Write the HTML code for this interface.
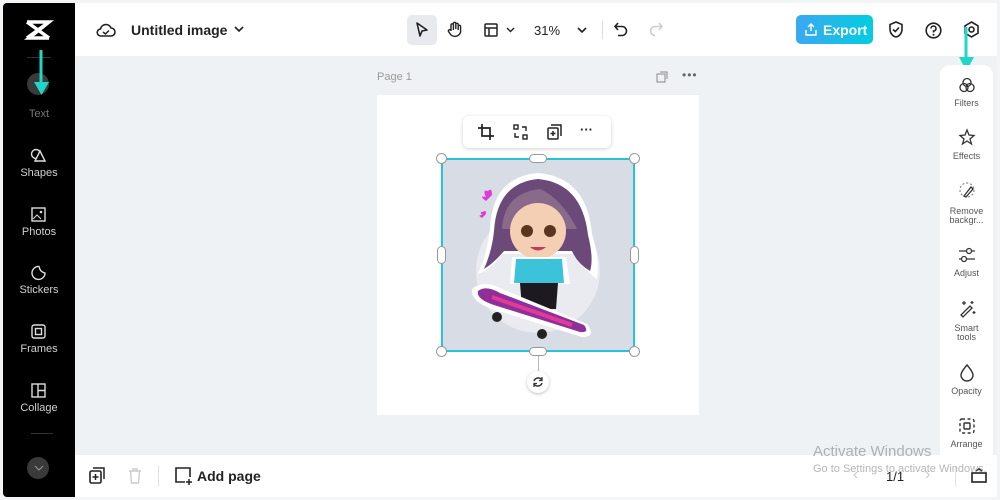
<!DOCTYPE html>
<html><head><meta charset="utf-8"><style>
*{margin:0;padding:0;box-sizing:border-box}
body{width:1000px;height:500px;overflow:hidden;background:#f3f4f6;font-family:"Liberation Sans",sans-serif;position:relative}
.a{position:absolute}
.side{left:3px;top:3px;width:72px;height:494px;background:#000;border-radius:4px 0 0 4px}
.sl{position:absolute;width:72px;text-align:center;color:#d0d0d0;font-size:11px;left:0}
.top{left:75px;top:3px;width:922px;height:53px;background:#fff}
.canvas{left:75px;top:56px;width:922px;height:399px;background:#eff2f5}
.bot{left:75px;top:455px;width:922px;height:42px;background:#fff}
.rp{left:940px;top:65px;width:53px;height:390px;background:#fff;border-radius:10px 10px 0 0}
.rl{position:absolute;left:940px;width:53px;text-align:center;font-size:9px;color:#555;line-height:9px}
svg{position:absolute;overflow:visible}
</style></head><body>
<div class="a side">
<svg style="left:22px;top:16px" width="28" height="24" viewBox="0 0 28 24"><path d="M2 3 H24 L4 19 H24 M2 3 L24 19 M2 19 L24 3" stroke="#fff" stroke-width="3.5" fill="none"/></svg>
<div class="a" style="left:24px;top:54px;width:24px;height:1px;background:#333"></div>
<div class="a" style="left:24px;top:70px;width:22px;height:22px;border-radius:50%;background:#3a3a3a"></div>
<div class="sl" style="top:105px;color:#777">Text</div>
<svg style="left:27px;top:145px" width="18" height="16"><circle cx="6" cy="6" r="4.5" fill="none" stroke="#ddd" stroke-width="1.4"/><path d="M10 3 L15 13 H5 Z" fill="#000" stroke="#ddd" stroke-width="1.4"/></svg>
<div class="sl" style="top:164px">Shapes</div>
<svg style="left:28px;top:204px" width="16" height="16"><rect x="1" y="1" width="13" height="13" fill="none" stroke="#ddd" stroke-width="1.4"/><path d="M2 12 L6 8 L10 12" stroke="#ddd" fill="none"/><circle cx="10" cy="5" r="1.3" fill="#ddd"/></svg>
<div class="sl" style="top:223px">Photos</div>
<svg style="left:28px;top:262px" width="16" height="16"><path d="M14 8 A6.5 6.5 0 1 1 8 1.5 Q9 7 14 8 Z" fill="none" stroke="#ddd" stroke-width="1.4"/></svg>
<div class="sl" style="top:281px">Stickers</div>
<svg style="left:28px;top:321px" width="16" height="16"><rect x="1" y="1" width="13" height="13" rx="2" fill="none" stroke="#ddd" stroke-width="1.4"/><rect x="4.5" y="4.5" width="6" height="6" fill="none" stroke="#ddd" stroke-width="1.4"/></svg>
<div class="sl" style="top:340px">Frames</div>
<svg style="left:28px;top:380px" width="16" height="16"><rect x="1" y="1" width="13" height="13" fill="none" stroke="#ddd" stroke-width="1.4"/><path d="M7 1 V14 M7 7.5 H14" stroke="#ddd" stroke-width="1.4"/></svg>
<div class="sl" style="top:399px">Collage</div>
<div class="a" style="left:28px;top:430px;width:22px;height:1px;background:#333"></div>
<div class="a" style="left:24px;top:454px;width:22px;height:22px;border-radius:50%;background:#3a3a3a"></div>
<svg style="left:31px;top:462px" width="10" height="6"><path d="M1 1 L5 5 L9 1" stroke="#999" fill="none"/></svg>
</div>
<div class="a" style="left:75px;top:228px;width:6px;height:47px;background:#2a2a2a;border-radius:0 6px 6px 0"></div>
<svg style="left:32px;top:50px" width="20" height="46"><path d="M9 0 V34" stroke="#1fd6c8" stroke-width="3"/><path d="M2 32 H17 L9.5 45 Z" fill="#1fd6c8"/></svg>

<div class="a top">
<svg style="left:21px;top:18px" width="20" height="18"><path d="M5 15 H15 A4 4 0 0 0 15 7 A5.5 5.5 0 0 0 4.5 8 A3.5 3.5 0 0 0 5 15 Z" fill="none" stroke="#222" stroke-width="1.6"/><path d="M7 11 L9.5 13 L13 9.5" stroke="#222" stroke-width="1.5" fill="none"/></svg>
<div class="a" style="left:56px;top:19px;font-size:14px;font-weight:bold;color:#222">Untitled image</div>
<svg style="left:159px;top:23px" width="10" height="6"><path d="M1 1 L5 5 L9 1" stroke="#222" stroke-width="1.6" fill="none"/></svg>
<div class="a" style="left:332px;top:12px;width:30px;height:30px;background:#e8eaee;border-radius:5px"></div>
<svg style="left:340px;top:19px" width="14" height="16"><path d="M2 1 L12 8 L7 9 L5 14 Z" fill="none" stroke="#222" stroke-width="1.6" stroke-linejoin="round"/></svg>
<svg style="left:372px;top:18px" width="16" height="18"><path d="M4 10 V4 A1.2 1.2 0 0 1 6.4 4 V9 M6.4 8 V2.5 A1.2 1.2 0 0 1 8.8 2.5 V8 M8.8 8 V3.5 A1.2 1.2 0 0 1 11.2 3.5 V9 M11.2 9 V5.5 A1.2 1.2 0 0 1 13.6 5.5 V11 A6 6 0 0 1 4 14 L1.5 10.5 A1.2 1.2 0 0 1 4 9.5" fill="none" stroke="#222" stroke-width="1.4"/></svg>
<svg style="left:409px;top:20px" width="14" height="14"><rect x="1" y="1" width="12" height="12" rx="1" fill="none" stroke="#222" stroke-width="1.5"/><path d="M1 5 H13 M5 5 V13" stroke="#222" stroke-width="1.5"/></svg>
<svg style="left:431px;top:24px" width="9" height="6"><path d="M1 1 L4.5 4.5 L8 1" stroke="#222" stroke-width="1.4" fill="none"/></svg>
<div class="a" style="left:459px;top:20px;font-size:13px;color:#222">31%</div>
<svg style="left:502px;top:24px" width="10" height="6"><path d="M1 1 L5 5 L9 1" stroke="#222" stroke-width="1.6" fill="none"/></svg>
<div class="a" style="left:527px;top:18px;width:1px;height:18px;background:#ddd"></div>
<svg style="left:539px;top:19px" width="14" height="15"><path d="M4 1 L1 4.5 L4 8 M1 4.5 H8 A4.5 4.5 0 0 1 8 13.5 H4" fill="none" stroke="#222" stroke-width="1.6"/></svg>
<svg style="left:574px;top:19px" width="14" height="15"><path d="M10 1 L13 4.5 L10 8 M13 4.5 H6 A4.5 4.5 0 0 0 6 13.5" fill="none" stroke="#ccc" stroke-width="1.5"/></svg>
<div class="a" style="left:721px;top:12px;width:77px;height:29px;border-radius:5px;background:linear-gradient(90deg,#3ca7f1,#03cde0)"></div>
<svg style="left:730px;top:20px" width="12" height="13"><path d="M6 8 V1 M3 4 L6 1 L9 4 M1 7 V12 H11 V7" stroke="#fff" stroke-width="1.4" fill="none"/></svg>
<div class="a" style="left:748px;top:19px;font-size:14px;font-weight:bold;color:#fff">Export</div>
<svg style="left:813px;top:18px" width="16" height="18"><path d="M8 1 L14 3.5 V8 A7 8 0 0 1 8 16 A7 8 0 0 1 2 8 V3.5 Z" fill="none" stroke="#222" stroke-width="1.6"/><path d="M5 8.5 L7.3 10.5 L11 6.5" stroke="#222" stroke-width="1.6" fill="none"/></svg>
<svg style="left:850px;top:19px" width="17" height="17"><circle cx="8.5" cy="8.5" r="7.3" fill="none" stroke="#222" stroke-width="1.6"/><path d="M6 6.5 A2.5 2.5 0 1 1 8.5 9 V10.5" stroke="#222" stroke-width="1.6" fill="none"/><circle cx="8.5" cy="12.8" r="1" fill="#222"/></svg>
<svg style="left:888px;top:18px" width="17" height="18"><path d="M8.5 1 L15 4.8 V12.2 L8.5 16 L2 12.2 V4.8 Z" fill="none" stroke="#222" stroke-width="1.6"/><circle cx="8.5" cy="8.5" r="2.5" fill="none" stroke="#222" stroke-width="1.6"/></svg>
</div>
<div class="a canvas"></div>
<svg style="left:958px;top:27px" width="18" height="46"><path d="M8 0 V32" stroke="#1fd6c8" stroke-width="3"/><path d="M1 30 H16 L8.5 44 Z" fill="#1fd6c8"/></svg>

<div class="a" style="left:377px;top:71px;font-size:11px;color:#999">Page 1</div>
<svg style="left:656px;top:71px" width="13" height="12"><rect x="1" y="3" width="8" height="8" fill="none" stroke="#888"/><path d="M4 1 H11 V8" stroke="#888" fill="none"/></svg>
<div class="a" style="left:682px;top:68px;font-size:12px;color:#666;letter-spacing:1px">•••</div>
<div class="a" style="left:377px;top:95px;width:322px;height:320px;background:#fff"></div>
<div class="a" style="left:463px;top:116px;width:148px;height:32px;background:#fff;border-radius:6px;box-shadow:0 1px 4px rgba(0,0,0,.18)"></div>
<svg style="left:478px;top:124px" width="16" height="16"><path d="M4 0 V12 H16 M0 4 H12 V16" stroke="#222" stroke-width="1.7" fill="none"/></svg>
<svg style="left:513px;top:124px" width="15" height="16"><rect x="1" y="1" width="4" height="4" fill="none" stroke="#222" stroke-width="1.4"/><rect x="10" y="11" width="4" height="4" fill="none" stroke="#222" stroke-width="1.4"/><path d="M9 3 H13 V7 M6 13 H2 V9" stroke="#222" stroke-width="1.4" fill="none"/></svg>
<svg style="left:547px;top:124px" width="15" height="16"><rect x="1" y="4" width="10" height="11" rx="1" fill="none" stroke="#222" stroke-width="1.5"/><path d="M4 1 H14 V12" stroke="#222" stroke-width="1.5" fill="none"/><path d="M6 7 V12 M3.5 9.5 H8.5" stroke="#222" stroke-width="1.5"/></svg>
<div class="a" style="left:580px;top:122px;font-size:13px;color:#222;font-weight:bold;letter-spacing:0px">···</div>

<div class="a" style="left:442px;top:159px;width:192px;height:192px;background:#d8dce5"></div>
<svg style="left:442px;top:159px" width="192" height="192" viewBox="0 0 192 192">
<circle cx="96" cy="112" r="62" fill="#e9ebf0"/>
<path d="M48 70 Q50 18 96 14 Q145 18 150 75 Q158 100 155 120 Q140 110 135 95 L60 95 Q50 110 36 115 Q45 95 48 70 Z" fill="#fff"/>
<path d="M52 72 Q55 24 96 20 Q140 24 146 76 Q152 100 148 112 Q135 104 130 92 L62 92 Q52 104 42 110 Q50 92 52 72 Z" fill="#6b4a7a"/>
<path d="M60 70 Q62 34 98 30 Q120 40 135 70" fill="#8a6a8a"/>
<ellipse cx="96" cy="72" rx="28" ry="28" fill="#f5cfb3"/>
<circle cx="85" cy="72" r="6" fill="#5a3520"/><circle cx="108" cy="72" r="6" fill="#5a3520"/>
<path d="M88 88 Q96 95 104 88" fill="#c43a5a"/>
<path d="M70 98 H124 L128 125 H68 Z" fill="#fff"/>
<path d="M74 100 H120 L122 124 H72 Z" fill="#3cc3da"/>
<path d="M78 124 H116 L114 150 H80 Z" fill="#1c1a20"/>
<path d="M30 130 Q42 120 60 130 L145 165 Q155 178 140 178 L50 150 Q28 142 30 130 Z" fill="#fff"/>
<path d="M36 132 Q44 126 58 134 L142 166 Q148 174 138 173 L52 146 Q34 140 36 132 Z" fill="#8e2f9a"/>
<path d="M50 138 L130 166" stroke="#e33a9a" stroke-width="4"/>
<circle cx="55" cy="158" r="5" fill="#222"/><circle cx="100" cy="175" r="5" fill="#222"/>
<path d="M44 38 Q40 30 46 32 Q50 28 50 36 L44 42 Q36 36 44 38 Z" fill="#e03ad8"/>
<path d="M40 56 Q37 52 41 53 Q44 50 44 55 L40 59 Q35 56 40 56 Z" fill="#e03ad8"/>
</svg>
<div class="a" style="left:441px;top:158px;width:194px;height:194px;border:2px solid #22c4dc"></div>
<div class="a" style="left:436px;top:153px;width:11px;height:11px;border-radius:50%;background:#fff;border:1px solid #999"></div>
<div class="a" style="left:629px;top:153px;width:11px;height:11px;border-radius:50%;background:#fff;border:1px solid #999"></div>
<div class="a" style="left:436px;top:346px;width:11px;height:11px;border-radius:50%;background:#fff;border:1px solid #999"></div>
<div class="a" style="left:629px;top:346px;width:11px;height:11px;border-radius:50%;background:#fff;border:1px solid #999"></div>
<div class="a" style="left:529px;top:154px;width:18px;height:9px;border-radius:5px;background:#fff;border:1px solid #999"></div>
<div class="a" style="left:529px;top:347px;width:18px;height:9px;border-radius:5px;background:#fff;border:1px solid #999"></div>
<div class="a" style="left:437px;top:246px;width:9px;height:18px;border-radius:5px;background:#fff;border:1px solid #999"></div>
<div class="a" style="left:630px;top:246px;width:9px;height:18px;border-radius:5px;background:#fff;border:1px solid #999"></div>
<div class="a" style="left:538px;top:356px;width:1px;height:16px;background:#bbb"></div>
<div class="a" style="left:527px;top:371px;width:22px;height:22px;border-radius:50%;background:#fff;box-shadow:0 1px 3px rgba(0,0,0,.25)"></div>
<svg style="left:532px;top:376px" width="12" height="12"><path d="M2 5 A4.5 4.5 0 0 1 10 4 M10 7 A4.5 4.5 0 0 1 2 8" stroke="#333" stroke-width="1.5" fill="none"/><path d="M10 1 V4.5 H7 M2 11 V7.5 H5" stroke="#333" stroke-width="1.3" fill="none"/></svg>

<div class="a rp"></div>
<svg style="left:958px;top:77px" width="18" height="17"><circle cx="9" cy="5.5" r="4" fill="none" stroke="#333" stroke-width="1.3"/><circle cx="6" cy="10.5" r="4" fill="none" stroke="#333" stroke-width="1.3"/><circle cx="12" cy="10.5" r="4" fill="none" stroke="#333" stroke-width="1.3"/></svg>
<div class="rl" style="top:99px">Filters</div>
<svg style="left:959px;top:129px" width="16" height="17"><path d="M8 1 L10 6 L15 6.5 L11 10 L12.5 15 L8 12 L3.5 15 L5 10 L1 6.5 L6 6 Z" fill="none" stroke="#333" stroke-width="1.3"/></svg>
<div class="rl" style="top:152px">Effects</div>
<svg style="left:959px;top:182px" width="17" height="17"><circle cx="8" cy="8" r="7" fill="none" stroke="#888" stroke-width="1.2" stroke-dasharray="2 2"/><path d="M5 14 L12 5 L14 7 L7 15 Z" fill="#fff" stroke="#333" stroke-width="1.3"/></svg>
<div class="rl" style="top:207px">Remove<br>backgr...</div>
<svg style="left:958px;top:247px" width="18" height="16"><path d="M1 4 H17 M1 12 H17" stroke="#333" stroke-width="1.3"/><circle cx="11" cy="4" r="2.5" fill="#fff" stroke="#333" stroke-width="1.3"/><circle cx="6" cy="12" r="2.5" fill="#fff" stroke="#333" stroke-width="1.3"/></svg>
<div class="rl" style="top:269px">Adjust</div>
<svg style="left:959px;top:300px" width="17" height="17"><path d="M2 15 L11 6 L13 8 L4 17 Z" fill="none" stroke="#333" stroke-width="1.3"/><path d="M5 1 V5 M3 3 H7 M13 1 V4 M11.5 2.5 H14.5 M15 11 V14 M13.5 12.5 H16.5" stroke="#333" stroke-width="1.2"/></svg>
<div class="rl" style="top:324px">Smart<br>tools</div>
<svg style="left:960px;top:364px" width="14" height="17"><path d="M7 1 Q13 8 13 11 A6 6 0 0 1 1 11 Q1 8 7 1 Z" fill="none" stroke="#333" stroke-width="1.4"/></svg>
<div class="rl" style="top:387px">Opacity</div>
<svg style="left:959px;top:418px" width="16" height="16"><rect x="1" y="1" width="14" height="14" rx="2" fill="none" stroke="#333" stroke-width="1.4" stroke-dasharray="3 2.5"/><rect x="5" y="5" width="6" height="6" rx="1" fill="none" stroke="#333" stroke-width="1.4"/></svg>
<div class="rl" style="top:440px">Arrange</div>

<div class="a bot"></div>
<svg style="left:89px;top:467px" width="17" height="17"><rect x="1" y="4" width="11" height="12" rx="1.5" fill="none" stroke="#222" stroke-width="1.6"/><path d="M4 1 H15 V12" stroke="#222" stroke-width="1.5" fill="none"/><path d="M6.5 7 V13 M3.5 10 H9.5" stroke="#222" stroke-width="1.5"/></svg>
<svg style="left:128px;top:468px" width="14" height="16"><path d="M1 3 H13 M5 3 V1 H9 V3 M2.5 3 L3.5 15 H10.5 L11.5 3" stroke="#ccc" stroke-width="1.4" fill="none"/></svg>
<div class="a" style="left:158px;top:466px;width:1px;height:20px;background:#e2e2e2"></div>
<svg style="left:175px;top:467px" width="18" height="18"><path d="M10 15 H1 V1 H15 V10" stroke="#222" stroke-width="1.6" fill="none"/><path d="M14 12 V18 M11 15 H17" stroke="#222" stroke-width="1.5"/></svg>
<div class="a" style="left:197px;top:468px;font-size:14px;font-weight:bold;color:#222">Add page</div>
<div class="a" style="left:853px;top:466px;font-size:16px;color:#ccc">‹</div>
<div class="a" style="left:886px;top:469px;font-size:13px;color:#222">1/1</div>
<div class="a" style="left:925px;top:466px;font-size:16px;color:#ccc">›</div>
<div class="a" style="left:955px;top:466px;width:1px;height:20px;background:#e2e2e2"></div>
<svg style="left:971px;top:468px" width="16" height="16"><rect x="1" y="5" width="14" height="9" fill="none" stroke="#222" stroke-width="1.6"/><path d="M5 3 L8 0.8 L11 3" stroke="#222" stroke-width="1.3" fill="none"/></svg>
<div class="a" style="left:813px;top:443px;font-size:15px;color:rgba(120,120,120,.55)">Activate Windows</div>
<div class="a" style="left:813px;top:463px;font-size:11px;color:rgba(120,120,120,.55)">Go to Settings to activate Windows.</div>
</body></html>
